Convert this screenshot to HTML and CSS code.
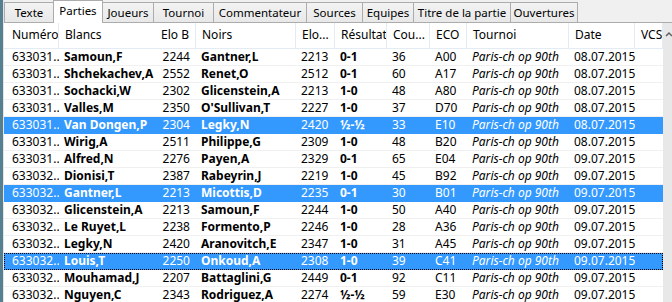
FILE: index.html
```html
<!DOCTYPE html>
<html lang="fr">
<head>
    <meta charset="UTF-8">
    <meta name="viewport" content="width=device-width, initial-scale=1.0">
    <title>Parties</title>
    <link rel="stylesheet" href="styles.css">
</head>
<body>
    <div class="app">
        <div class="edge"></div>
        <div class="main">
            <div class="tabs">
                <div class="tab w-texte">Texte</div>
                <div class="tab active w-parties">Parties</div>
                <div class="tab w-joueurs">Joueurs</div>
                <div class="tab w-tournoi">Tournoi</div>
                <div class="tab w-comm">Commentateur</div>
                <div class="tab w-sources">Sources</div>
                <div class="tab w-equipes">Equipes</div>
                <div class="tab w-titre">Titre de la partie</div>
                <div class="tab last w-ouv">Ouvertures</div>
            </div>
            <div class="view">
                <div class="grid">
                    <div class="row head">
                        <span class="first">Numéro</span><span class="nosep">Blancs</span><span class="r">Elo B</span><span>Noirs</span><span>Elo...</span><span>Résultat</span><span>Cou...</span><span>ECO</span><span>Tournoi</span><span>Date</span><span>VCS</span>
                    </div>
                    <div class="row">
                        <span class="first">633031..</span><span class="b">Samoun,F</span><span class="r">2244</span><span class="b">Gantner,L</span><span>2213</span><span class="b">0-1</span><span>36</span><span>A00</span><span class="i">Paris-ch op 90th</span><span>08.07.2015</span><span></span>
                    </div>
                    <div class="row">
                        <span class="first">633031..</span><span class="b">Shchekachev,A</span><span class="r">2552</span><span class="b">Renet,O</span><span>2512</span><span class="b">0-1</span><span>60</span><span>A17</span><span class="i">Paris-ch op 90th</span><span>08.07.2015</span><span></span>
                    </div>
                    <div class="row">
                        <span class="first">633031..</span><span class="b">Sochacki,W</span><span class="r">2302</span><span class="b">Glicenstein,A</span><span>2213</span><span class="b">1-0</span><span>48</span><span>A80</span><span class="i">Paris-ch op 90th</span><span>08.07.2015</span><span></span>
                    </div>
                    <div class="row">
                        <span class="first">633031..</span><span class="b">Valles,M</span><span class="r">2350</span><span class="b">O'Sullivan,T</span><span>2227</span><span class="b">1-0</span><span>37</span><span>D70</span><span class="i">Paris-ch op 90th</span><span>08.07.2015</span><span></span>
                    </div>
                    <div class="row sel">
                        <span class="first">633031..</span><span class="b">Van Dongen,P</span><span class="r">2304</span><span class="b">Legky,N</span><span>2420</span><span class="b">½-½</span><span>33</span><span>E10</span><span class="i">Paris-ch op 90th</span><span>08.07.2015</span><span></span>
                    </div>
                    <div class="row">
                        <span class="first">633031..</span><span class="b">Wirig,A</span><span class="r">2511</span><span class="b">Philippe,G</span><span>2309</span><span class="b">1-0</span><span>48</span><span>B20</span><span class="i">Paris-ch op 90th</span><span>08.07.2015</span><span></span>
                    </div>
                    <div class="row">
                        <span class="first">633031..</span><span class="b">Alfred,N</span><span class="r">2276</span><span class="b">Payen,A</span><span>2329</span><span class="b">0-1</span><span>65</span><span>E04</span><span class="i">Paris-ch op 90th</span><span>09.07.2015</span><span></span>
                    </div>
                    <div class="row">
                        <span class="first">633032..</span><span class="b">Dionisi,T</span><span class="r">2387</span><span class="b">Rabeyrin,J</span><span>2219</span><span class="b">1-0</span><span>45</span><span>B92</span><span class="i">Paris-ch op 90th</span><span>09.07.2015</span><span></span>
                    </div>
                    <div class="row sel">
                        <span class="first">633032..</span><span class="b">Gantner,L</span><span class="r">2213</span><span class="b">Micottis,D</span><span>2235</span><span class="b">0-1</span><span>30</span><span>B01</span><span class="i">Paris-ch op 90th</span><span>09.07.2015</span><span></span>
                    </div>
                    <div class="row">
                        <span class="first">633032..</span><span class="b">Glicenstein,A</span><span class="r">2213</span><span class="b">Samoun,F</span><span>2244</span><span class="b">1-0</span><span>50</span><span>A40</span><span class="i">Paris-ch op 90th</span><span>09.07.2015</span><span></span>
                    </div>
                    <div class="row">
                        <span class="first">633032..</span><span class="b">Le Ruyet,L</span><span class="r">2238</span><span class="b">Formento,P</span><span>2246</span><span class="b">1-0</span><span>28</span><span>A36</span><span class="i">Paris-ch op 90th</span><span>09.07.2015</span><span></span>
                    </div>
                    <div class="row">
                        <span class="first">633032..</span><span class="b">Legky,N</span><span class="r">2420</span><span class="b">Aranovitch,E</span><span>2347</span><span class="b">1-0</span><span>31</span><span>A45</span><span class="i">Paris-ch op 90th</span><span>09.07.2015</span><span></span>
                    </div>
                    <div class="row sel focus">
                        <span class="first">633032..</span><span class="b">Louis,T</span><span class="r">2250</span><span class="b">Onkoud,A</span><span>2308</span><span class="b">1-0</span><span>39</span><span>C41</span><span class="i">Paris-ch op 90th</span><span>09.07.2015</span><span></span>
                    </div>
                    <div class="row">
                        <span class="first">633032..</span><span class="b">Mouhamad,J</span><span class="r">2207</span><span class="b">Battaglini,G</span><span>2449</span><span class="b">0-1</span><span>92</span><span>C11</span><span class="i">Paris-ch op 90th</span><span>09.07.2015</span><span></span>
                    </div>
                    <div class="row">
                        <span class="first">633032..</span><span class="b">Nguyen,C</span><span class="r">2343</span><span class="b">Rodriguez,A</span><span>2274</span><span class="b">½-½</span><span>59</span><span>E30</span><span class="i">Paris-ch op 90th</span><span>09.07.2015</span><span></span>
                    </div>
                </div>
                <div class="scroll">
                    <svg width="9" height="14" viewBox="0 0 9 14"><path d="M3 11 L6 8 L9 11" fill="none" stroke="#606060" stroke-width="1.5"/></svg>
                </div>
            </div>
        </div>
    </div>
</body>
</html>
```

FILE: styles.css
```css
body {
    margin: 0;
    font-family: "Noto Sans", "Segoe UI", sans-serif;
    font-size: 12px;
    color: #000000;
    background: #ffffff;
    width: 672px;
    height: 302px;
    overflow: hidden;
}
.app {
    display: flex;
    height: 302px;
}
.edge {
    width: 3px;
    background: #55808f;
    border-right: 1px solid #e4e4e4;
}
.main {
    flex: 1;
    display: flex;
    flex-direction: column;
    min-width: 0;
}

/* onglets */
.tabs {
    height: 22px;
    background: #f0f0f0;
    border-bottom: 1px solid #acacac;
    display: flex;
    align-items: flex-end;
    font-size: 11.5px;
}
.tab {
    box-sizing: border-box;
    height: 20px;
    line-height: 19px;
    text-align: center;
    white-space: nowrap;
    border: 1px solid #acacac;
    border-bottom: none;
    border-right: none;
    background: linear-gradient(#f3f3f3, #e8e8e8);
}
.tab.last {
    border-right: 1px solid #acacac;
}
.tab.active {
    height: 23px;
    line-height: 20px;
    margin-bottom: -1px;
    margin-right: -1px;
    background: #ffffff;
    border-right: 1px solid #acacac;
    position: relative;
    z-index: 1;
}
.w-texte { width: 49px; }
.w-parties { width: 50px; }
.w-joueurs { width: 51px; }
.w-tournoi { width: 60px; }
.w-comm { width: 93px; }
.w-sources { width: 56px; }
.w-equipes { width: 51px; }
.w-titre { width: 97px; }
.w-ouv { width: 68px; }

/* liste des parties */
.view {
    flex: 1;
    display: flex;
    min-height: 0;
}
.grid {
    width: 659px;
}
.row {
    display: grid;
    grid-template-columns: 55px 96px 41px 100px 39px 52px 43px 37px 102px 66px 28px;
    box-sizing: border-box;
    height: 17px;
    line-height: 16px;
    border-bottom: 1px solid #f0f0f0;
}
.row > span {
    padding-left: 5px;
    white-space: nowrap;
    overflow: hidden;
}
.row > span.first {
    padding-left: 8px;
}
.row > span.r {
    padding-left: 0;
    padding-right: 6px;
    text-align: right;
}
.head {
    height: 26px;
    line-height: 24px;
    border-bottom: 1px solid #e3ebf5;
}
.head > span {
    padding-left: 6px;
    border-right: 1px solid #e3ebf5;
}
.head > span.nosep {
    border-right: none;
}
.b {
    font-weight: bold;
}
.i {
    font-style: italic;
}
.sel {
    background: #3399ff;
    color: #ffffff;
    border-bottom-color: #3399ff;
}
.focus {
    outline: 1px dotted #000000;
    outline-offset: -1px;
}
.scroll {
    width: 9px;
    background: #e8e8e8;
}
.scroll svg {
    display: block;
    margin-top: 2px;
}
```
